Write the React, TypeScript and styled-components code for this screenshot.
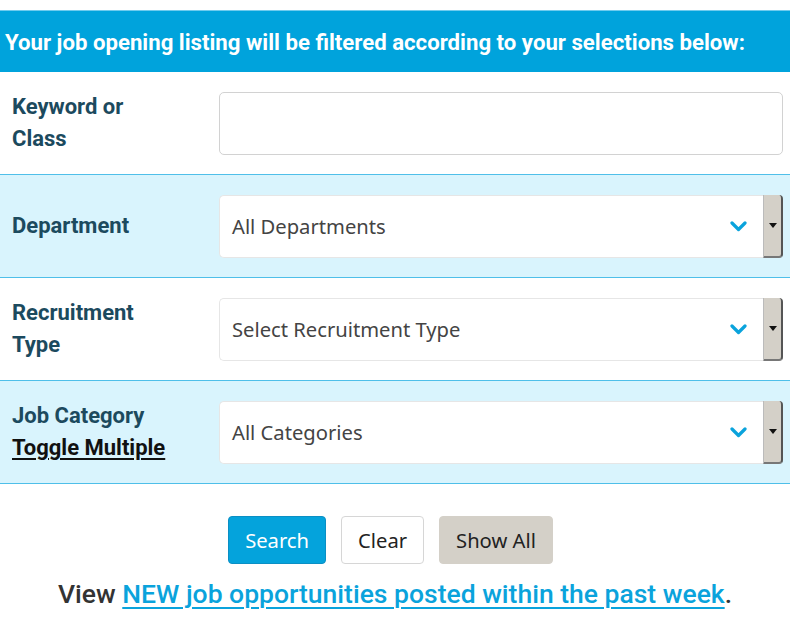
import React from "react";
import styled, { createGlobalStyle } from "styled-components";

const Global = createGlobalStyle`
  html, body { margin: 0; padding: 0; background: #fff; }
  body { font-family: Roboto, "Liberation Sans", sans-serif; }
`;

const Page = styled.div`
  width: 790px;
  padding-top: 10px;
`;

const Banner = styled.div`
  background: #00a3dc;
  border-top: 1px solid #6fcbee;
  height: 61px;
  display: flex;
  align-items: center;
  padding-left: 5px;
  color: #fff;
  font-family: Roboto, sans-serif;
  font-weight: 700;
  font-size: 22.2px;
  white-space: nowrap;
`;

const Row = styled.div<{ $shade?: boolean }>`
  display: flex;
  align-items: center;
  height: 102px;
  border-bottom: 1px solid #4fbfe9;
  background: ${(p) => (p.$shade ? "#d9f4fd" : "#fff")};
`;

const Label = styled.div`
  width: 219px;
  flex-shrink: 0;
  padding-left: 12px;
  box-sizing: border-box;
  padding-right: 47px;
  color: #1c4a5e;
  font-family: Roboto, sans-serif;
  font-weight: 700;
  font-size: 22px;
  line-height: 32px;
`;

const ToggleLink = styled.a`
  display: block;
  color: #111;
  text-decoration: underline;
  text-underline-offset: 3px;
  text-decoration-thickness: 2px;
  white-space: nowrap;
  cursor: pointer;
`;

const TextInput = styled.input`
  width: 564px;
  height: 63px;
  box-sizing: border-box;
  border: 1px solid #d2d2d2;
  border-radius: 5px;
  background: #fff;
  padding: 0 12px;
  font-size: 20px;
  outline: none;
`;

const SelectBox = styled.div`
  display: flex;
  width: 564px;
  height: 63px;
  box-sizing: border-box;
`;

const SelectField = styled.div`
  flex: 1;
  display: flex;
  align-items: center;
  justify-content: space-between;
  background: #fff;
  border: 1px solid #e6e6e6;
  border-right: none;
  border-radius: 5px 0 0 5px;
  padding: 0 16px 0 12px;
  color: #444;
  font-family: "Noto Sans", "Open Sans", sans-serif;
  font-size: 20.2px;
`;

const ArrowButton = styled.div`
  width: 20px;
  background: #d4d0c8;
  border-left: 1px solid #bbb;
  border-right: 2px solid #555;
  border-bottom: 2px solid #777;
  border-radius: 0 4px 4px 0;
  box-sizing: border-box;
  display: flex;
  align-items: center;
  justify-content: center;
`;

const Buttons = styled.div`
  display: flex;
  justify-content: center;
  gap: 15px;
  margin-top: 32px;
  padding-right: 9px;
`;

const Btn = styled.button<{ $variant: "primary" | "plain" | "grey" }>`
  height: 48px;
  padding: 0 16px;
  border-radius: 4px;
  font-family: "Noto Sans", "Open Sans", sans-serif;
  font-size: 20.2px;
  cursor: pointer;
  border: 1px solid
    ${(p) => (p.$variant === "primary" ? "#0b8fc4" : p.$variant === "plain" ? "#d6d6d6" : "#d4d0c8")};
  background: ${(p) => (p.$variant === "primary" ? "#04a3dc" : p.$variant === "plain" ? "#fff" : "#d4d0c8")};
  color: ${(p) => (p.$variant === "primary" ? "#fff" : "#222")};
`;

const ViewLine = styled.p`
  margin: 14px 0 0;
  text-align: center;
  font-family: Roboto, sans-serif;
  font-weight: 500;
  font-size: 26.5px;
  color: #333;
`;

const NewLink = styled.a`
  color: #0aa3dc;
  text-decoration: underline;
  text-underline-offset: 4px;
  text-decoration-thickness: 1.5px;
  cursor: pointer;
`;

const Chevron = () => (
  <svg width="17" height="11" viewBox="0 0 17 11">
    <path d="M2 2 L8.5 8.5 L15 2" fill="none" stroke="#0aa3dc" strokeWidth="3.2" strokeLinecap="round" strokeLinejoin="round" />
  </svg>
);

const Tri = () => (
  <svg width="8" height="5" viewBox="0 0 8 5">
    <path d="M0 0 H8 L4 5 Z" fill="#111" />
  </svg>
);

const Select = ({ value }: { value: string }) => (
  <SelectBox>
    <SelectField>
      <span>{value}</span>
      <Chevron />
    </SelectField>
    <ArrowButton>
      <Tri />
    </ArrowButton>
  </SelectBox>
);

export default function App() {
  return (
    <Page>
      <Global />
      <Banner>Your job opening listing will be filtered according to your selections below:</Banner>
      <Row>
        <Label>Keyword or Class</Label>
        <TextInput type="text" />
      </Row>
      <Row $shade>
        <Label>Department</Label>
        <Select value="All Departments" />
      </Row>
      <Row>
        <Label>Recruitment Type</Label>
        <Select value="Select Recruitment Type" />
      </Row>
      <Row $shade>
        <Label>
          Job Category
          <ToggleLink>Toggle Multiple</ToggleLink>
        </Label>
        <Select value="All Categories" />
      </Row>
      <Buttons>
        <Btn $variant="primary">Search</Btn>
        <Btn $variant="plain">Clear</Btn>
        <Btn $variant="grey">Show All</Btn>
      </Buttons>
      <ViewLine>
        View <NewLink>NEW job opportunities posted within the past week</NewLink>.
      </ViewLine>
    </Page>
  );
}
